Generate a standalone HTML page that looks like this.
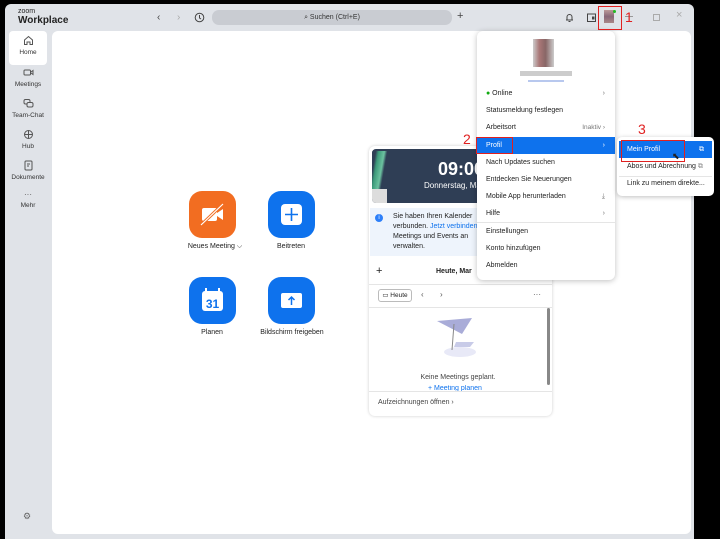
<!DOCTYPE html>
<html><head><style>
*{box-sizing:border-box;margin:0;padding:0}
body{width:720px;height:535px;background:#000;font-family:"Liberation Sans",sans-serif;position:relative;overflow:hidden;color:#222}
.win{position:absolute;left:5px;top:4px;width:689px;height:535px;background:#e0e3e8;border-radius:6px 6px 0 0}
.abs{position:absolute}
.content{position:absolute;left:52px;top:31px;width:639px;height:503px;background:#fff;border-radius:6px}
.nav{position:absolute;left:9px;width:38px;text-align:center;font-size:6.5px;color:#333}
.nav svg{display:block;margin:0 auto 3px}
.btn{position:absolute;width:47px;height:47px;border-radius:13px;background:#0e72ed}
.lbl{position:absolute;font-size:7px;color:#222;text-align:center}
.menu{position:absolute;left:477px;top:31px;width:138px;height:249px;background:#fff;border-radius:6px;box-shadow:0 1px 6px rgba(0,0,0,.25)}
.mi{position:absolute;left:0;width:138px;height:17px;font-size:7px;line-height:17px;padding-left:9px;color:#222}
.chev{position:absolute;right:10px;color:#777}
.red{position:absolute;border:1.5px solid #e02020}
.num{position:absolute;color:#e02020;font-size:14px}
</style></head><body>
<div class="win">
 <div class="abs" style="left:13px;top:4px;font-size:7px;color:#222;line-height:7px">zoom</div>
 <div class="abs" style="left:13px;top:11px;font-size:10px;font-weight:bold;color:#222">Workplace</div>
 <div class="abs" style="left:152px;top:8px;font-size:10px;color:#444">‹</div>
 <div class="abs" style="left:172px;top:8px;font-size:10px;color:#aaa">›</div>
 <svg class="abs" style="left:189px;top:8px" width="11" height="11" viewBox="0 0 11 11"><circle cx="5.5" cy="5.5" r="4.3" fill="none" stroke="#444" stroke-width="1"/><path d="M5.5 3v3l1.5 1" fill="none" stroke="#444"/></svg>
 <div class="abs" style="left:207px;top:6px;width:240px;height:15px;background:#c9ccd2;border-radius:7px;font-size:7px;line-height:15px;text-align:center;color:#333">⌕ Suchen (Ctrl+E)</div>
 <div class="abs" style="left:452px;top:6px;font-size:11px;color:#444">+</div>
 <svg class="abs" style="left:559px;top:8px" width="11" height="11" viewBox="0 0 11 11"><path d="M2 8h7M3 8V5a2.5 2.5 0 015 0v3M4.5 9.5h2" fill="none" stroke="#444"/></svg>
 <svg class="abs" style="left:581px;top:8px" width="11" height="11" viewBox="0 0 11 11"><rect x="1.5" y="2" width="8" height="7.5" fill="none" stroke="#444"/><rect x="6" y="4.5" width="2.5" height="3" fill="#444"/></svg>
 <div class="abs" style="left:599px;top:6px;width:10px;height:13px;background:linear-gradient(#b99,#867,#a88)"></div>
 <div class="abs" style="left:608px;top:6px;width:3px;height:3px;background:#2b2;border-radius:50%"></div>
 <div class="abs" style="left:620px;top:12px;width:8px;height:1px;background:#999"></div>
 <div class="abs" style="left:648px;top:10px;width:7px;height:7px;border:1px solid #aaa"></div>
 <div class="abs" style="left:671px;top:5px;font-size:11px;color:#aaa">×</div>
 <div class="abs" style="left:4px;top:27px;width:38px;height:34px;background:#fff;border-radius:4px"></div>
</div>
<div class="nav" style="top:35px"><svg width="11" height="11" viewBox="0 0 11 11"><path d="M1.5 5L5.5 1.5 9.5 5V9.5H7V7H4V9.5H1.5Z" fill="none" stroke="#555"/></svg>Home</div>
<div class="nav" style="top:67px"><svg width="11" height="11" viewBox="0 0 11 11"><rect x="1" y="3" width="6.5" height="5" rx="1" fill="none" stroke="#555"/><path d="M8 5l2-1.5v4L8 6" fill="none" stroke="#555"/></svg>Meetings</div>
<div class="nav" style="top:98px"><svg width="11" height="11" viewBox="0 0 11 11"><rect x="1" y="1.5" width="6" height="4.5" rx="1.5" fill="none" stroke="#555"/><rect x="4" y="4.5" width="6" height="4.5" rx="1.5" fill="#e0e3e8" stroke="#555"/></svg>Team-Chat</div>
<div class="nav" style="top:129px"><svg width="11" height="11" viewBox="0 0 11 11"><circle cx="5.5" cy="5.5" r="4" fill="none" stroke="#555"/><path d="M1.5 5.5h8M5.5 1.5v8" stroke="#555"/></svg>Hub</div>
<div class="nav" style="top:160px"><svg width="11" height="11" viewBox="0 0 11 11"><rect x="2" y="1" width="7" height="9" rx="1" fill="none" stroke="#555"/><path d="M4 4h3M4 6h2" stroke="#555"/></svg>Dokumente</div>
<div class="nav" style="top:191px"><div style="font-size:8px;line-height:8px;color:#555;margin-bottom:3px">···</div>Mehr</div>
<div class="abs" style="left:23px;top:511px;font-size:9px;color:#666">⚙</div>
<div class="content"></div>
<div class="btn" style="left:189px;top:191px;background:#f26d21"><svg width="47" height="47" viewBox="0 0 47 47"><rect x="13" y="17" width="15" height="13" rx="2" fill="#fff"/><path d="M28 22l6-4v11l-6-4z" fill="#fff"/><path d="M12 34L34 13" stroke="#f26d21" stroke-width="3"/><path d="M12 34L34 13" stroke="#fff" stroke-width="1.2"/></svg></div>
<div class="lbl" style="left:180px;top:243px;width:70px">Neues Meeting ⌵</div>
<div class="btn" style="left:268px;top:191px"><svg width="47" height="47" viewBox="0 0 47 47"><rect x="13" y="13" width="21" height="21" rx="4" fill="#fff"/><path d="M23.5 17v13M17 23.5h13" stroke="#0e72ed" stroke-width="1.6"/></svg></div>
<div class="lbl" style="left:261px;top:243px;width:60px">Beitreten</div>
<div class="btn" style="left:189px;top:277px"><svg width="47" height="47" viewBox="0 0 47 47"><rect x="13" y="14" width="21" height="20" rx="3" fill="#fff"/><path d="M17 11v6M30 11v6" stroke="#fff" stroke-width="2"/><text x="23.5" y="31" font-size="12" font-weight="bold" text-anchor="middle" fill="#0e72ed" font-family="Liberation Sans">31</text></svg></div>
<div class="lbl" style="left:182px;top:329px;width:60px">Planen</div>
<div class="btn" style="left:268px;top:277px"><svg width="47" height="47" viewBox="0 0 47 47"><rect x="13" y="16" width="21" height="15" rx="2" fill="#fff"/><path d="M23.5 28v-8M20.5 23l3-3 3 3" fill="none" stroke="#0e72ed" stroke-width="1.5"/></svg></div>
<div class="lbl" style="left:250px;top:329px;width:84px">Bildschirm freigeben</div>
<!-- calendar card -->
<div class="abs" style="left:369px;top:146px;width:183px;height:270px;background:#fff;border-radius:6px;box-shadow:0 0 3px rgba(0,0,0,.2)">
 <div class="abs" style="left:3px;top:3px;width:177px;height:54px;background:#2f3e55;border-radius:4px;overflow:hidden">
  <div class="abs" style="left:-2px;top:2px;width:22px;height:40px;background:linear-gradient(100deg,#2f3e55 20%,#3c9a7a 30%,#6cc2a0 50%,#2f3e55 60%)"></div>
  <div class="abs" style="left:0;top:40px;width:15px;height:14px;background:#ddd"></div>
  <div class="abs" style="left:66px;top:10px;font-size:18px;font-weight:bold;color:#fff">09:00</div>
  <div class="abs" style="left:52px;top:32px;font-size:8px;color:#fff">Donnerstag, Mar</div>
 </div>
 <div class="abs" style="left:1px;top:62px;width:181px;height:48px;background:#eef4fc"></div>
 <div class="abs" style="left:6px;top:68px;width:8px;height:8px;border-radius:50%;background:#2d7ff9;color:#fff;font-size:6px;text-align:center;line-height:8px">i</div>
 <div class="abs" style="left:24px;top:66px;font-size:7px;line-height:10px;color:#222">Sie haben Ihren Kalender<br>verbunden. <span style="color:#0e72ed">Jetzt verbinden</span><br>Meetings und Events an<br>verwalten.</div>
 <div class="abs" style="left:7px;top:119px;font-size:11px">+</div>
 <div class="abs" style="left:67px;top:122px;font-size:7px;font-weight:bold">Heute, Mar</div>
 <div class="abs" style="left:0;top:138px;width:183px;height:1px;background:#e5e5e5"></div>
 <div class="abs" style="left:9px;top:143px;width:34px;height:13px;border:1px solid #bbb;border-radius:3px;font-size:6.5px;line-height:11px;text-align:center">▭ Heute</div>
 <div class="abs" style="left:52px;top:144px;font-size:8px;color:#555">‹</div>
 <div class="abs" style="left:71px;top:144px;font-size:8px;color:#555">›</div>
 <div class="abs" style="left:164px;top:144px;font-size:8px;color:#555">···</div>
 <div class="abs" style="left:0;top:161px;width:183px;height:1px;background:#e5e5e5"></div>
 <div class="abs" style="left:178px;top:162px;width:3px;height:77px;background:#888;border-radius:2px"></div>
 <svg class="abs" style="left:63px;top:170px" width="60" height="45" viewBox="0 0 60 45"><ellipse cx="28" cy="36" rx="16" ry="5" fill="#e8e9f7"/><path d="M5 5L40 2 30 18Z" fill="#a9acd8"/><path d="M22 8L20 34" stroke="#888" stroke-width="1"/><path d="M24 26h18l-4 5H22z" fill="#c8cbe8"/></svg>
 <div class="abs" style="left:0;top:228px;width:178px;text-align:center;font-size:7px;color:#444">Keine Meetings geplant.</div>
 <div class="abs" style="left:59px;top:239px;font-size:7px;color:#0e72ed;height:6px;overflow:hidden">+ Meeting planen</div>
 <div class="abs" style="left:0;top:245px;width:183px;height:1px;background:#e5e5e5"></div>
 <div class="abs" style="left:9px;top:253px;font-size:7px;color:#444">Aufzeichnungen öffnen ›</div>
</div>
<!-- menu -->
<div class="menu">
 <div class="abs" style="left:56px;top:8px;width:21px;height:28px;background:linear-gradient(90deg,#ccc,#a77 30%,#866 60%,#ccc)"></div>
 <div class="abs" style="left:43px;top:40px;width:52px;height:5px;background:#ccc"></div>
 <div class="abs" style="left:51px;top:49px;width:36px;height:2px;background:#b8c8ee"></div>
 <div class="mi" style="top:54px"><span style="color:#1a1;font-size:7px">●</span> Online<span class="chev">›</span></div>
 <div class="mi" style="top:71px">Statusmeldung festlegen</div>
 <div class="mi" style="top:88px">Arbeitsort<span class="chev" style="font-size:6.5px">Inaktiv ›</span></div>
 <div class="mi" style="top:106px;background:#0e72ed;color:#fff">Profil<span class="chev" style="color:#fff">›</span></div>
 <div class="mi" style="top:123px">Nach Updates suchen</div>
 <div class="mi" style="top:140px">Entdecken Sie Neuerungen</div>
 <div class="mi" style="top:157px">Mobile App herunterladen<span class="chev">⤓</span></div>
 <div class="mi" style="top:174px">Hilfe<span class="chev">›</span></div>
 <div class="abs" style="left:0;top:191px;width:138px;height:1px;background:#e5e5e5"></div>
 <div class="mi" style="top:192px">Einstellungen</div>
 <div class="mi" style="top:209px">Konto hinzufügen</div>
 <div class="mi" style="top:226px">Abmelden</div>
</div>
<!-- submenu -->
<div class="abs" style="left:617px;top:137px;width:97px;height:59px;background:#fff;border-radius:5px;box-shadow:0 1px 5px rgba(0,0,0,.25)">
 <div class="abs" style="left:2px;top:4px;width:93px;height:17px;background:#0e72ed;color:#fff;font-size:7px;line-height:17px;padding-left:8px">Mein Profil<span style="position:absolute;right:8px">⧉</span></div>
 <div class="abs" style="left:10px;top:26px;font-size:7px">Abos und Abrechnung <span style="color:#888">⧉</span></div>
 <div class="abs" style="left:2px;top:39px;width:93px;height:1px;background:#e5e5e5"></div>
 <div class="abs" style="left:10px;top:43px;font-size:7px">Link zu meinem direkte...</div>
</div>
<div class="abs" style="left:672px;top:151px;font-size:9px">⬉</div>
<!-- annotations -->
<div class="red" style="left:598px;top:6px;width:24px;height:24px"></div>
<div class="num" style="left:625px;top:9px">1</div>
<div class="red" style="left:476px;top:137px;width:37px;height:17px"></div>
<div class="num" style="left:463px;top:131px">2</div>
<div class="red" style="left:621px;top:140px;width:64px;height:22px"></div>
<div class="num" style="left:638px;top:121px">3</div>
</body></html>
